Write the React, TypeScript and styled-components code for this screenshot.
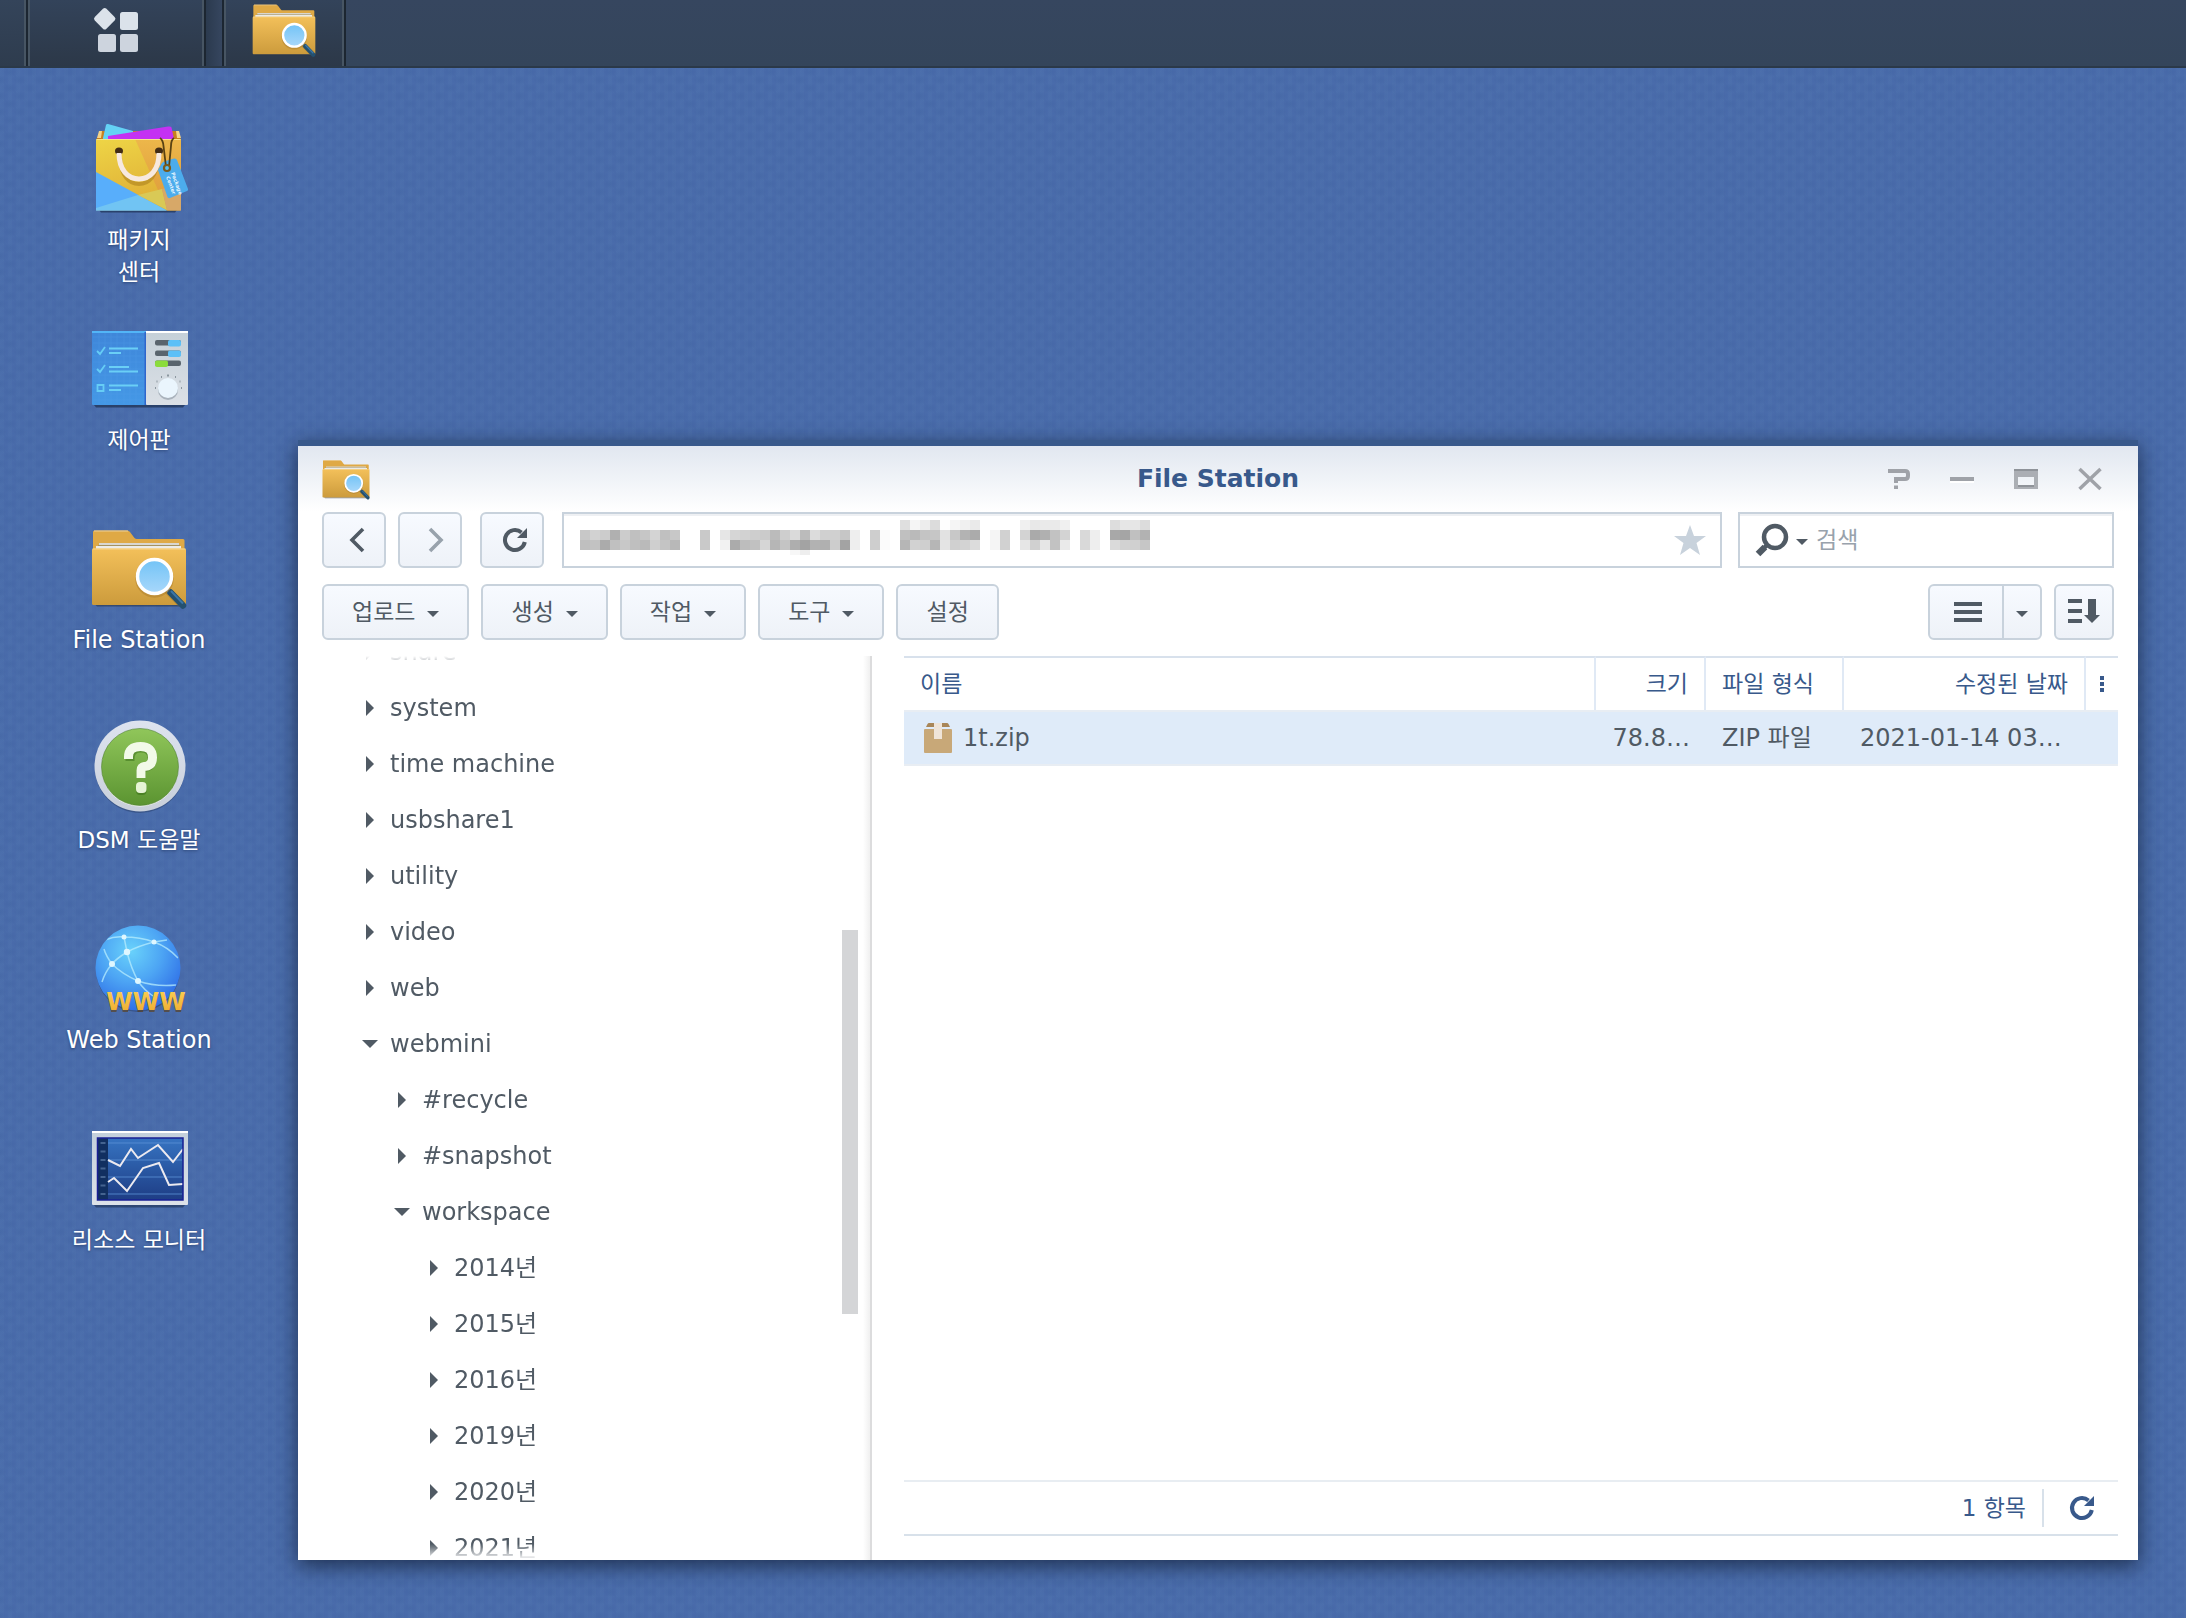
import React from "react";
import styled, { createGlobalStyle } from "styled-components";

const FONT = '"DejaVu Sans", "Noto Sans CJK KR", sans-serif';
const INK = "#505a64";
const NAVY = "#38598b";
const LINE = "#c8d2dc";

const GlobalStyle = createGlobalStyle`
  *, *::before, *::after { box-sizing: border-box; }
  body { margin: 0; font-family: ${FONT}; font-size: 24px; color: ${INK}; }
  button, input { font: inherit; color: inherit; margin: 0; padding: 0; border: 0; background: none; }
  button { cursor: pointer; }
  svg { display: block; flex: none; overflow: visible; }
`;

const Desktop = styled.div`
  position: relative;
  min-height: 100vh;
  display: flex;
  flex-direction: column;
  background-color: #4a6cab;
  background-image:
    radial-gradient(ellipse 10px 5px at 50% 50%, rgba(40, 74, 138, 0.13), transparent 100%),
    radial-gradient(ellipse 10px 5px at 50% 50%, rgba(40, 74, 138, 0.13), transparent 100%),
    linear-gradient(90deg, rgba(120, 165, 205, 0.04) 50%, transparent 50%);
  background-size: 20px 16px, 20px 16px, 8px 4px;
  background-position: 0 0, 10px 8px, 0 0;
`;

const Taskbar = styled.header`
  display: flex;
  height: 68px;
  background: linear-gradient(#36465f, #34455b);
  border-bottom: 2px solid #2b3949;
`;

const TaskEdge = styled.div`
  width: 26px;
  background: linear-gradient(#34445a, #2e3c4e);
  border-right: 2px solid #475563;
`;

const TaskButton = styled.button<{ $width: number }>`
  width: ${(p) => p.$width}px;
  height: 66px;
  padding-bottom: 6px;
  display: flex;
  align-items: center;
  justify-content: center;
  border: solid #1c2631;
  border-width: 0 2px;
  background: linear-gradient(#33435a, #2c3848);
  box-shadow: inset 2px 0 #475563, inset -2px 0 #475563;
`;

const TaskGap = styled.div`
  width: 16px;
  background: linear-gradient(90deg, #2b3a4e, #36465f);
`;

const Shortcuts = styled.nav`
  width: 278px;
  padding-top: 52px;
  display: flex;
  flex-direction: column;
`;

const Shortcut = styled.button`
  height: 200px;
  display: flex;
  flex-direction: column;
  align-items: center;
  gap: 8px;
  color: #fff;
`;

const ShortcutLabel = styled.span<{ $size: number }>`
  font-size: ${(p) => p.$size}px;
  line-height: 32px;
  white-space: pre-line;
  text-shadow: 0 1px 3px rgba(20, 40, 80, 0.6);
`;

const Window = styled.main`
  position: absolute;
  top: 440px;
  right: 48px;
  bottom: 58px;
  left: 298px;
  display: flex;
  flex-direction: column;
  background: #fff;
  border-top: 6px solid ${NAVY};
  box-shadow: 0 6px 20px rgba(16, 30, 52, 0.75);
`;

const TitleBar = styled.div`
  height: 66px;
  flex: none;
  display: grid;
  grid-template-columns: 1fr auto 1fr;
  align-items: center;
  padding: 0 24px;
  background: linear-gradient(#e1e7f0, #fff);
`;

const Title = styled.h1`
  margin: 0;
  font-size: 25px;
  line-height: 32px;
  color: ${NAVY};
`;

const WindowControls = styled.div`
  display: flex;
  justify-content: flex-end;
  gap: 40px;
  padding-right: 12px;
  color: #9fa2a8;
`;

const ToolRow = styled.div`
  height: 56px;
  flex: none;
  display: flex;
  gap: 12px;
  margin: 0 24px 16px;
`;

const PushButton = styled.button`
  height: 56px;
  padding: 0 28px;
  display: flex;
  align-items: center;
  gap: 12px;
  font-size: 23px;
  line-height: 32px;
  white-space: nowrap;
  background: linear-gradient(#f7faff, #eef2f8);
  border: 2px solid ${LINE};
  border-radius: 6px;
`;

const NavButton = styled(PushButton)`
  width: 64px;
  padding: 0 0 0 6px;
  justify-content: center;
`;

const NavGroup = styled.div`
  display: flex;
  gap: 12px;
  margin-right: 6px;
`;

const PathBox = styled.div`
  flex: 1;
  min-width: 0;
  margin: 0 4px 0 6px;
  padding: 0 14px 0 16px;
  display: flex;
  align-items: center;
  justify-content: space-between;
  border: 2px solid ${LINE};
  box-shadow: inset 0 2px #eef0f3;
`;

const SearchBox = styled.label`
  width: 376px;
  padding-left: 16px;
  display: flex;
  align-items: center;
  gap: 8px;
  border: 2px solid ${LINE};
  box-shadow: inset 0 2px #eef0f3;
`;

const SearchInput = styled.input`
  flex: 1;
  min-width: 0;
  font-size: 23px;
  outline: none;
  &::placeholder { color: #98a2ac; opacity: 1; }
`;

const ViewGroup = styled.div`
  display: flex;
  margin-left: auto;
`;

const ViewButton = styled(PushButton)`
  width: 76px;
  padding: 0 0 0 4px;
  justify-content: center;
  border-radius: 6px 0 0 6px;
`;

const ViewMenuButton = styled(PushButton)`
  width: 40px;
  margin-left: -2px;
  padding: 0;
  justify-content: center;
  border-radius: 0 6px 6px 0;
`;

const SortButton = styled(PushButton)`
  width: 60px;
  padding: 0;
  justify-content: center;
`;

const Content = styled.div`
  flex: 1;
  min-height: 0;
  display: flex;
`;

const TreePane = styled.aside`
  position: relative;
  width: 574px;
  flex: none;
  border-right: 2px solid #dcdcdd;
  background: linear-gradient(270deg, #f0f0f0, #fff 7px);
`;

const TreeClip = styled.div`
  height: 100%;
  width: 540px;
  overflow: hidden;
  mask-image: linear-gradient(transparent, #000 16px, #000 calc(100% - 16px), transparent);
`;

const TreeList = styled.ul`
  margin: -32px 0 0;
  padding: 0;
  list-style: none;
`;

const TreeRow = styled.button<{ $level: number }>`
  width: 100%;
  height: 56px;
  padding-left: ${(p) => 64 + p.$level * 32}px;
  display: flex;
  align-items: center;
  gap: 12px;
  line-height: 32px;
  text-align: left;
  white-space: nowrap;
`;

const ScrollThumb = styled.div`
  position: absolute;
  top: 274px;
  right: 12px;
  width: 16px;
  height: 384px;
  background: #d4d5d7;
`;

const FilePane = styled.section`
  flex: 1;
  min-width: 0;
  display: flex;
  flex-direction: column;
  margin: 0 20px 24px 32px;
`;

const FileTable = styled.table`
  width: 100%;
  table-layout: fixed;
  border-collapse: separate;
  border-spacing: 0;
  line-height: 32px;
`;

const HeadCell = styled.th<{ $align?: "left" | "right" | "center" }>`
  height: 54px;
  padding: 0 16px;
  font-size: 23px;
  font-weight: 400;
  text-align: ${(p) => p.$align ?? "left"};
  white-space: nowrap;
  color: ${NAVY};
  border-top: 2px solid #d8e1ec;
  border-right: 2px solid #e0e9f5;
  &:last-child { padding: 0; border-right: 0; }
`;

const Cell = styled.td<{ $align?: "left" | "right" }>`
  height: 56px;
  padding: 0 16px;
  text-align: ${(p) => p.$align ?? "left"};
  white-space: nowrap;
  background: #dfebf9;
  border: solid #e8edf3;
  border-width: 2px 0;
`;

const FileName = styled.span`
  display: flex;
  align-items: center;
  gap: 11px;
  padding-left: 4px;
`;

const HeadMenu = styled.button`
  width: 100%;
  height: 50px;
  display: flex;
  align-items: center;
  justify-content: center;
`;

const StatusBar = styled.footer`
  height: 56px;
  margin-top: auto;
  padding-right: 24px;
  display: flex;
  align-items: center;
  justify-content: flex-end;
  gap: 16px;
  font-size: 23px;
  line-height: 32px;
  color: ${NAVY};
  border: solid #e8edf2;
  border-width: 2px 0;
  border-bottom-color: #d8e1ea;
`;

const StatusDivider = styled.span`
  width: 2px;
  height: 38px;
  margin-right: 10px;
  background: #d8e1ea;
`;

function FolderIcon({ width, id }: { width: number; id: string }) {
  return (
    <svg width={width} height={(width * 80) / 96} viewBox="0 -2 96 80" aria-hidden="true">
      <defs>
        <linearGradient id={`${id}f`} x1="0" y1="0" x2="0" y2="1">
          <stop offset="0" stopColor="#f3c05a" />
          <stop offset="1" stopColor="#cc9b3c" />
        </linearGradient>
        <linearGradient id={`${id}l`} x1="0" y1="0" x2="0" y2="1">
          <stop offset="0" stopColor="#72c3f6" />
          <stop offset="1" stopColor="#a9d8fb" />
        </linearGradient>
      </defs>
      <path d="M4 74.500h89l-2 2H6z" fill="#24344f" opacity=".6" />
      <path d="M2 20V2q0-1.500 1.500-1.500H36q2 0 3 1.500l4.500 6Q44.500 9 46 9h46q1.500 0 1.500 1.500V20z" fill="#dfa945" />
      <path d="M3 1h34" stroke="#eed19a" />
      <path d="M8 13h80v5H8z" fill="#d9d7d0" />
      <path d="M7 15.500h82" stroke="#a5925f" strokeWidth="1" />
      <path d="M5 16h85v4H5z" fill="#ecebe6" />
      <rect x="1" y="18.500" width="94" height="56.500" rx="1.500" fill={`url(#${id}f)`} />
      <path d="M1.500 19h93" stroke="#f8d68b" />
      <path d="M76 60l14 14" stroke="#8e6a25" strokeWidth="7" opacity=".4" />
      <path d="M75 58l4 4" stroke="#c7ccd2" strokeWidth="4" />
      <path d="M79.500 62.500l12.500 13" stroke="#24506f" strokeWidth="6.500" strokeLinecap="round" />
      <path d="M80 61l12 12.500" stroke="#3c76a6" strokeWidth="2" />
      <circle cx="63.500" cy="48.500" r="17.500" fill="none" stroke="#a87b2a" strokeWidth="3.500" opacity=".45" />
      <circle cx="63.500" cy="46.500" r="17" fill={`url(#${id}l)`} stroke="#fff" strokeWidth="3.500" />
    </svg>
  );
}

const PackageIcon = () => (
  <svg width="96" height="96" viewBox="0 0 96 96" aria-hidden="true">
    <defs>
      <linearGradient id="bag" x1="0" y1="0" x2=".3" y2="1">
        <stop offset="0" stopColor="#eed546" />
        <stop offset="1" stopColor="#dfae36" />
      </linearGradient>
      <linearGradient id="bagSide" x1="0" y1="0" x2="0" y2="1">
        <stop offset="0" stopColor="#edb74a" />
        <stop offset="1" stopColor="#dc983a" />
      </linearGradient>
    </defs>
    <path d="M8 90h78l-2 2.500H10z" fill="#1d2f50" opacity=".7" />
    <path d="M8 11h80v3l2 6H5l3-6z" fill="#c87f1e" />
    <path d="M8 11h3l-1 7H6zM88 11h-3l1 7h4z" fill="#f4d389" />
    <path d="M12 18L15 5q.5-1.500 2-1L42 11v8H12z" fill="#64d2f5" />
    <path d="M17 19v-3l60-9.500q3-.5 3.500 1L83 19z" fill="#c431f3" />
    <rect x="5" y="19" width="85" height="71.500" rx="1" fill="url(#bag)" />
    <path d="M44 19h45q1 0 1 1v70H76z" fill="url(#bagSide)" />
    <path d="M5 52l71 38.500H5z" fill="#58aefb" />
    <path d="M5 88l42-13 29 15.500H5z" fill="#71c4f3" />
    <path d="M47 75l24-6 5 21z" fill="#d9c956" />
    <path d="M71 69l19-6v27.500H76z" fill="#d7a868" />
    <path d="M5.500 19.500h84" stroke="#f6e38e" />
    <ellipse cx="28" cy="31" rx="4" ry="3.500" fill="#432c14" />
    <ellipse cx="68" cy="31" rx="4" ry="3.500" fill="#432c14" />
    <path d="M29 38C30 56 38 64 48 64s18-8 19-26" fill="none" stroke="#a87b1c" strokeWidth="4" opacity=".55" />
    <path d="M28 33C28 50 37 59 48 59s20-9 20-26" fill="none" stroke="#f7e9df" strokeWidth="5" />
    <path d="M67 50l4-7q1-1 2-1.500l10-3q2-.5 3 1.500l11 29q.5 1.500-1 2l-17 7q-2 .5-2.500-1z" fill="#4cacec" />
    <path d="M69 18q3 2 3.500 8L75 47M83 18q-3 2-3 8l-2 21" fill="none" stroke="#5a4213" strokeWidth="1.800" />
    <circle cx="76" cy="48" r="3" fill="#56c0f5" stroke="#7a5b1c" strokeWidth="2.200" />
    <g transform="translate(80 53) rotate(70)" fill="#e6f5ff" fontSize="5" fontWeight="700" fontFamily={FONT}>
      <text x="0" y="0">Package</text>
      <text x="2" y="6">Center</text>
    </g>
  </svg>
);

const ControlPanelIcon = () => (
  <svg width="96" height="96" viewBox="0 0 96 96" aria-hidden="true">
    <defs>
      <linearGradient id="cpBlue" x1="0" y1="0" x2="0" y2="1">
        <stop offset="0" stopColor="#3f86d9" />
        <stop offset="1" stopColor="#4498e6" />
      </linearGradient>
      <linearGradient id="cpGrey" x1="0" y1="0" x2="0" y2="1">
        <stop offset="0" stopColor="#c5d0d8" />
        <stop offset="1" stopColor="#dbe0e6" />
      </linearGradient>
    </defs>
    <path d="M3 85h91l-2 2.500H5z" fill="#1d2f50" opacity=".7" />
    <rect x="1" y="11" width="54" height="74" rx="1" fill="url(#cpBlue)" />
    <path d="M8 12v72M14 12v72M20 12v72M26 12v72M33 12v72M39 12v72M45 12v72M2 17h52M2 23h52M2 30h52M2 36h52M2 42h52M2 49h52M2 55h52M2 61h52M2 68h52M2 74h52M2 80h52" stroke="#5aa6ec" strokeWidth=".6" opacity=".35" />
    <path d="M1 12h54" stroke="#52b5f7" strokeWidth="2" />
    <path d="M54.500 12v73" stroke="#2f66cc" strokeWidth="2" />
    <rect x="55" y="11" width="42" height="74" rx="1" fill="url(#cpGrey)" />
    <path d="M55 12h42" stroke="#fff" strokeWidth="2" />
    <path d="M6 31l3 3 5-7M6 49l3 3 5-7M6.500 65h6v6h-6z" fill="none" stroke="#66cdf5" strokeWidth="1.800" />
    <path d="M18 28.500h29M18 33h12M18 47h20M18 51.500h29M18 65.500h29M18 70h12" stroke="#6acff6" strokeWidth="2" />
    <rect x="64" y="20" width="26" height="5.500" rx="2" fill="#59646d" />
    <rect x="77" y="20" width="13" height="6.500" rx="2" fill="#5cc0f7" />
    <rect x="64" y="30.500" width="26" height="5.500" rx="2" fill="#59646d" />
    <rect x="77" y="30.500" width="13" height="6.500" rx="2" fill="#5cc0f7" />
    <rect x="64" y="40.500" width="26" height="5.500" rx="2" fill="#59646d" />
    <rect x="64" y="40.500" width="13" height="6.500" rx="2" fill="#8bdc3c" />
    <path d="M64 68h1M91 68h-1M65.500 61.500h1M89.500 61.500h-1M70 57h1M84 57h1M77 54.500v2" stroke="#8b979f" strokeWidth="2" />
    <circle cx="77" cy="70" r="10" fill="#8995a0" opacity=".6" />
    <circle cx="77" cy="68" r="10" fill="#eaf5fd" />
  </svg>
);

const HelpIcon = () => (
  <svg width="96" height="96" viewBox="0 0 96 96" aria-hidden="true">
    <defs>
      <linearGradient id="helpGreen" x1="0" y1="0" x2="0" y2="1">
        <stop offset="0" stopColor="#90c65a" />
        <stop offset="1" stopColor="#5b9431" />
      </linearGradient>
      <linearGradient id="helpRing" x1="0" y1="0" x2="0" y2="1">
        <stop offset="0" stopColor="#dde3ef" />
        <stop offset="1" stopColor="#c8cfda" />
      </linearGradient>
    </defs>
    <circle cx="49" cy="48" r="45" fill="#1d2f50" opacity=".35" />
    <circle cx="49" cy="46" r="45.500" fill="url(#helpRing)" />
    <circle cx="49" cy="48" r="38.500" fill="#f8fbf4" />
    <circle cx="49" cy="47" r="38.500" fill="url(#helpGreen)" stroke="#4f7f35" strokeWidth=".6" />
    <path d="M39 39v-2q0-11 11-11t11 11q0 8-8 8.500-3 .5-3 4V56" transform="translate(0 2)" fill="none" stroke="#2f6410" strokeWidth="9" opacity=".45" />
    <path d="M37.500 39v-2q0-10.500 12-10.500t12 11q0 8.500-8 9-3.500.5-3.500 4V58" fill="none" stroke="#f2fae8" strokeWidth="9" />
    <rect x="45" y="64" width="10.500" height="11" rx="4" fill="#2f6410" opacity=".45" />
    <rect x="45" y="62" width="10.500" height="11" rx="4" fill="#e6f4d5" />
  </svg>
);

const WebIcon = () => (
  <svg width="96" height="96" viewBox="0 0 96 96" aria-hidden="true">
    <defs>
      <radialGradient id="globe" cx=".42" cy=".3" r=".72">
        <stop offset="0" stopColor="#69d2fb" />
        <stop offset=".5" stopColor="#4da5f4" />
        <stop offset="1" stopColor="#2e6de6" />
      </radialGradient>
      <linearGradient id="www" x1="0" y1="0" x2="0" y2="1">
        <stop offset="0" stopColor="#fbd155" />
        <stop offset="1" stopColor="#eda82e" />
      </linearGradient>
      <clipPath id="globeClip"><circle cx="47" cy="48" r="42" /></clipPath>
    </defs>
    <circle cx="47" cy="50" r="42" fill="#1d2f50" opacity=".4" />
    <circle cx="47" cy="48" r="42.500" fill="url(#globe)" />
    <g clipPath="url(#globeClip)" fill="none" stroke="#b5ecfd" strokeWidth="1.500" opacity=".75">
      <path d="M14 20q10-4 19-3 16 0 30 5 14 5 24 16M33 17l3 15q4 16 11 29 6 9 15 15M76 20l-13 2q-16 4-27 10-11 7-15 12-7 8-10 18M21 44q-6-8-8-15M21 44q10 10 26 17 18 6 38 4" />
    </g>
    <g fill="#dff7ff">
      <circle cx="33" cy="17" r="2.500" /><circle cx="63" cy="22" r="2.500" />
      <circle cx="36" cy="32" r="3.200" /><circle cx="21" cy="44" r="3" /><circle cx="47" cy="61" r="3" />
    </g>
    <text x="55" y="91.500" textAnchor="middle" fontSize="24" fontWeight="700" fontFamily={FONT} fill="#5c3c10" opacity=".6">WWW</text>
    <text x="55" y="90" textAnchor="middle" fontSize="24" fontWeight="700" fontFamily={FONT} fill="url(#www)">WWW</text>
  </svg>
);

const MonitorIcon = () => (
  <svg width="96" height="96" viewBox="0 0 96 96" aria-hidden="true">
    <defs>
      <linearGradient id="screen" x1="0" y1="0" x2="0" y2="1">
        <stop offset="0" stopColor="#3674c2" />
        <stop offset="1" stopColor="#1e3d85" />
      </linearGradient>
      <linearGradient id="bezel" x1="0" y1="0" x2="0" y2="1">
        <stop offset="0" stopColor="#c2cfdb" />
        <stop offset="1" stopColor="#dde2e9" />
      </linearGradient>
    </defs>
    <path d="M3 85h91l-2 2.500H5z" fill="#1d2f50" opacity=".6" />
    <rect x="1" y="11" width="96" height="74" rx="1" fill="url(#bezel)" />
    <path d="M1 12h96" stroke="#fff" strokeWidth="2" />
    <rect x="6.500" y="18" width="85.500" height="62" fill="url(#screen)" />
    <path d="M17 23h74M17 40h74M17 57h74M17 74h74" stroke="#5b93d6" strokeWidth=".8" />
    <rect x="6.500" y="18" width="10.500" height="62" fill="#112f60" />
    <path d="M9.500 23h5M9.500 31.500h5M9.500 40h5M9.500 48.500h5M9.500 57h5M9.500 65.500h5M9.500 74h5" stroke="#44638f" strokeWidth="2" />
    <path d="M17 40l12 6 11-17 7 9 20-13 15 17 10-13M17 62l6-4 13 13 16-23 16-5 10 22 14-1" fill="none" stroke="#eceaf0" strokeWidth="2" />
    <rect x="6.500" y="18" width="85.500" height="62" fill="none" stroke="#191f93" strokeWidth="1.500" />
  </svg>
);

const LauncherIcon = () => (
  <svg width="46" height="46" viewBox="0 0 46 46" fill="#dbe2ea" aria-hidden="true">
    <rect x="3.500" y="3.500" width="16.500" height="16.500" rx="2.500" transform="rotate(45 11.700 11.700)" />
    <rect x="27" y="5" width="18" height="18" rx="2.500" />
    <rect x="5" y="27" width="18" height="18" rx="2.500" fill="#cdd4de" />
    <rect x="27" y="27" width="18" height="18" rx="2.500" fill="#cdd4de" />
  </svg>
);

const ReloadIcon = () => (
  <svg width="24" height="24" viewBox="0 0 24 24" aria-hidden="true">
    <path d="M21.800 14A10 10 0 1 1 18.500 4.400" fill="none" stroke="currentColor" strokeWidth="4" />
    <path d="M24 0v10H14z" fill="currentColor" />
  </svg>
);

const CaretDown = () => (
  <svg width="12" height="10" viewBox="0 0 12 10" fill="currentColor" aria-hidden="true">
    <path d="M0 4h12L6 10z" />
  </svg>
);

const Disclosure = ({ open }: { open?: boolean }) => (
  <svg width="16" height="16" viewBox="0 0 16 16" fill="currentColor" aria-hidden="true">
    <path d={open ? "M0 4h16l-8 8z" : "M4 0v16l8-8z"} />
  </svg>
);

const ZipIcon = () => (
  <svg width="28" height="30" viewBox="0 0 28 30" aria-hidden="true">
    <path d="M5 0h18q1 0 1.500 1L26 4H2l1.500-3Q4 0 5 0z" fill="#a98658" />
    <rect y="6" width="28" height="24" rx="1" fill="#c8a878" />
    <path d="M10 0h8v16h-8z" fill="#efe4d8" />
  </svg>
);

/* Each redacted breadcrumb segment: start column, start row, rows of grey cells. */
const redacted: { x: number; y: number; rows: string[][] }[] = [
  { x: 0, y: 1, rows: [
    "c8 d2 cc b0 cc c0 c6 d4 c0 c8".split(" "),
    "bf c2 ab c0 c8 bf ba cf c4 b8".split(" ") ] },
  { x: 12, y: 1, rows: [["c9"], ["c9"]] },
  { x: 14, y: 1, rows: [
    "e6 d6 d2 ce cb bb ce da bb dc d0 d0 c6 ee".split(" "),
    "f2 ab bd c1 d6 b6 c4 ae a3 b2 b0 cd a3 ee".split(" ") ] },
  { x: 29, y: 1, rows: [["ce", "fb"], ["ce", "fb"]] },
  { x: 32, y: 0, rows: [
    "df f5 ed dc fe f5 f0 ea".split(" "),
    "c0 ba c4 c6 e2 c8 b3 ab".split(" "),
    "b6 d2 cf b6 e4 d0 d3 dc".split(" ") ] },
  { x: 41, y: 1, rows: [["f5", "d1"], ["f5", "d1"]] },
  { x: 44, y: 0, rows: [
    "f0 e8 ea ea f0".split(" "),
    "d3 aa b0 c2 d3".split(" "),
    "e6 d0 e6 c2 ea".split(" ") ] },
  { x: 50, y: 1, rows: [["d9", "ee"], ["d9", "ee"]] },
  { x: 53, y: 0, rows: [
    "dd e6 e6 dc".split(" "),
    "a8 a5 c0 b2".split(" "),
    "da d2 d0 c6".split(" ") ] },
];

const RedactedPath = () => (
  <svg width="570" height="40" viewBox="0 0 570 40" shapeRendering="crispEdges" aria-hidden="true">
    {redacted.flatMap((block, b) =>
      block.rows.flatMap((row, r) =>
        row.map((grey, c) => (
          <rect key={`${b}-${r}-${c}`} x={(block.x + c) * 10} y={(block.y + r) * 10} width="10" height="10" fill={`#${grey}${grey}${grey}`} />
        ))
      )
    )}
    <rect x="210" y="30" width="10" height="5" fill="#f7f7f7" />
    <rect x="220" y="30" width="10" height="5" fill="#eee" />
  </svg>
);

const FolderBox = styled.span`
  height: 96px;
  display: flex;
  align-items: center;
`;

const FolderShortcut = () => (
  <FolderBox>
    <FolderIcon width={96} id="desk" />
  </FolderBox>
);

const shortcuts = [
  { label: "패키지\n센터", size: 23, icon: <PackageIcon /> },
  { label: "제어판", size: 23, icon: <ControlPanelIcon /> },
  { label: "File Station", size: 24, icon: <FolderShortcut /> },
  { label: "DSM 도움말", size: 23, icon: <HelpIcon /> },
  { label: "Web Station", size: 24, icon: <WebIcon /> },
  { label: "리소스 모니터", size: 23, icon: <MonitorIcon /> },
];

const tree: { name: string; level: number; open?: boolean }[] = [
  { name: "share", level: 0 },
  { name: "system", level: 0 },
  { name: "time machine", level: 0 },
  { name: "usbshare1", level: 0 },
  { name: "utility", level: 0 },
  { name: "video", level: 0 },
  { name: "web", level: 0 },
  { name: "webmini", level: 0, open: true },
  { name: "#recycle", level: 1 },
  { name: "#snapshot", level: 1 },
  { name: "workspace", level: 1, open: true },
  { name: "2014년", level: 2 },
  { name: "2015년", level: 2 },
  { name: "2016년", level: 2 },
  { name: "2019년", level: 2 },
  { name: "2020년", level: 2 },
  { name: "2021년", level: 2 },
];

const menus = ["업로드", "생성", "작업", "도구"];

export default function App() {
  return (
    <Desktop>
      <GlobalStyle />
      <Taskbar>
        <TaskEdge />
        <TaskButton $width={180} aria-label="메인 메뉴"><LauncherIcon /></TaskButton>
        <TaskGap />
        <TaskButton $width={124} aria-label="File Station"><FolderIcon width={64} id="task" /></TaskButton>
      </Taskbar>

      <Shortcuts>
        {shortcuts.map((s) => (
          <Shortcut key={s.label}>
            {s.icon}
            <ShortcutLabel $size={s.size}>{s.label}</ShortcutLabel>
          </Shortcut>
        ))}
      </Shortcuts>

      <Window>
        <TitleBar>
          <FolderIcon width={48} id="title" />
          <Title>File Station</Title>
          <WindowControls>
            <button aria-label="도움말">
              <svg width="24" height="20" viewBox="0 0 24 20" aria-hidden="true">
                <path d="M2 2h17q3 0 3 3v2q0 3-3 3h-9v4" fill="none" stroke="currentColor" strokeWidth="4" />
                <path d="M8 16.500h4V20H8z" fill="currentColor" />
              </svg>
            </button>
            <button aria-label="최소화">
              <svg width="24" height="20" viewBox="0 0 24 20" aria-hidden="true">
                <path d="M0 10h24" stroke="currentColor" strokeWidth="4" />
                <path d="M0 13h24" stroke="#fff" strokeWidth="2" />
              </svg>
            </button>
            <button aria-label="최대화">
              <svg width="24" height="20" viewBox="0 0 24 20" aria-hidden="true">
                <path d="M0 0h24v20H0zM4 8v8h16V8z" fill="currentColor" fillRule="evenodd" opacity=".85" />
                <path d="M0 1h24M4 17h16" stroke="#8f9399" strokeWidth="2" />
              </svg>
            </button>
            <button aria-label="닫기">
              <svg width="24" height="20" viewBox="0 0 24 20" aria-hidden="true">
                <path d="M1.500 0l21 20M22.500 0l-21 20" stroke="currentColor" strokeWidth="3.500" />
              </svg>
            </button>
          </WindowControls>
        </TitleBar>

        <ToolRow>
          <NavGroup>
            <NavButton aria-label="뒤로">
              <svg width="28" height="24" viewBox="0 0 28 24" aria-hidden="true">
                <path d="M20 1L9 12l11 11" fill="none" stroke="currentColor" strokeWidth="3.600" />
              </svg>
            </NavButton>
            <NavButton aria-label="앞으로">
              <svg width="28" height="24" viewBox="0 0 28 24" aria-hidden="true">
                <path d="M11 1l11 11-11 11" fill="none" stroke="#98a2ac" strokeWidth="3.600" />
              </svg>
            </NavButton>
          </NavGroup>
          <NavButton aria-label="새로 고침"><ReloadIcon /></NavButton>
          <PathBox>
            <RedactedPath />
            <button aria-label="즐겨찾기">
              <svg width="32" height="30" viewBox="0 0 32 30" aria-hidden="true">
                <path d="M16 0l4 11h12l-9.500 7 3.500 12-10-7-10 7 3.500-12L0 11h12z" fill={LINE} />
              </svg>
            </button>
          </PathBox>
          <SearchBox aria-label="검색">
            <svg width="32" height="32" viewBox="0 0 32 32" fill="none" stroke="currentColor" aria-hidden="true">
              <circle cx="19" cy="13" r="11" strokeWidth="4.500" />
              <path d="M11 21l-3 3" strokeWidth="4" />
              <path d="M9 23l-7 7" strokeWidth="6.500" />
            </svg>
            <CaretDown />
            <SearchInput placeholder="검색" />
          </SearchBox>
        </ToolRow>

        <ToolRow>
          {menus.map((m) => (
            <PushButton key={m}>{m}<CaretDown /></PushButton>
          ))}
          <PushButton>설정</PushButton>
          <ViewGroup>
            <ViewButton aria-label="목록 보기">
              <svg width="28" height="20" viewBox="0 0 28 20" fill="currentColor" aria-hidden="true">
                <path d="M0 0h28v4H0zM0 8h28v4H0zM0 16h28v4H0z" />
              </svg>
            </ViewButton>
            <ViewMenuButton aria-label="보기 모드"><CaretDown /></ViewMenuButton>
          </ViewGroup>
          <SortButton aria-label="정렬">
            <svg width="32" height="28" viewBox="0 0 32 28" fill="currentColor" aria-hidden="true">
              <path d="M0 1h14v4H0zM0 11h14v4H0zM0 21h14v4H0zM20 1h8v16h4l-8 8-8-8h4z" />
            </svg>
          </SortButton>
        </ToolRow>

        <Content>
          <TreePane>
            <TreeClip>
              <TreeList>
                {tree.map((n) => (
                  <li key={n.name}>
                    <TreeRow $level={n.level}>
                      <Disclosure open={n.open} />
                      {n.name}
                    </TreeRow>
                  </li>
                ))}
              </TreeList>
            </TreeClip>
            <ScrollThumb />
          </TreePane>

          <FilePane>
            <FileTable>
              <colgroup>
                <col />
                <col width="110" />
                <col width="138" />
                <col width="242" />
                <col width="32" />
              </colgroup>
              <thead>
                <tr>
                  <HeadCell>이름</HeadCell>
                  <HeadCell $align="right">크기</HeadCell>
                  <HeadCell>파일 형식</HeadCell>
                  <HeadCell $align="right">수정된 날짜</HeadCell>
                  <HeadCell>
                    <HeadMenu aria-label="열 선택">
                      <svg width="4" height="16" viewBox="0 0 4 16" fill="currentColor" aria-hidden="true">
                        <path d="M0 0h4v4H0zM0 6h4v4H0zM0 12h4v4H0z" />
                      </svg>
                    </HeadMenu>
                  </HeadCell>
                </tr>
              </thead>
              <tbody>
                <tr>
                  <Cell><FileName><ZipIcon />1t.zip</FileName></Cell>
                  <Cell $align="right">78.8…</Cell>
                  <Cell>ZIP 파일</Cell>
                  <Cell>2021-01-14 03…</Cell>
                  <Cell />
                </tr>
              </tbody>
            </FileTable>
            <StatusBar>
              <span>1 항목</span>
              <StatusDivider />
              <button aria-label="새로 고침"><ReloadIcon /></button>
            </StatusBar>
          </FilePane>
        </Content>
      </Window>
    </Desktop>
  );
}
